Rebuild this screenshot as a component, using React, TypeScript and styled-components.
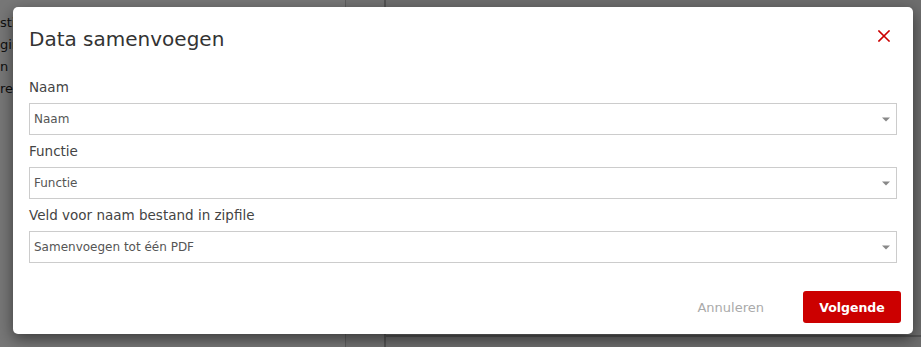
import React from "react";
import styled, { createGlobalStyle } from "styled-components";

const GlobalStyle = createGlobalStyle`
	html, body {
		margin: 0;
		padding: 0;
		height: 100%;
		overflow: hidden;
	}
	body {
		font-family: "DejaVu Sans", "Liberation Sans", sans-serif;
		color: #333;
	}
	#root {
		height: 100%;
	}
`;

const fields = [
	{ label: "Naam", value: "Naam" },
	{ label: "Functie", value: "Functie" },
	{ label: "Veld voor naam bestand in zipfile", value: "Samenvoegen tot één PDF" },
];

// fragments of the page behind the dialog, mostly hidden by it
const sideLines = ["stig", "gim", "n n", "re"];

function Caret() {
	return (
		<svg width="8" height="5" viewBox="0 0 8 5">
			<polygon points="0,0.5 8,0.5 4,4.5" fill="#888" />
		</svg>
	);
}

function CloseIcon() {
	return (
		<svg width="12" height="12" viewBox="0 0 12 12">
			<path d="M1 1 L11 11 M11 1 L1 11" stroke="#cc0000" strokeWidth="1.6" strokeLinecap="square" />
		</svg>
	);
}

export default function App() {
	return (
		<Screen>
			<GlobalStyle />
			<BackPage>
				<Sidebar>
					{sideLines.map((line) => (
						<SideLine key={line}>{line}</SideLine>
					))}
				</Sidebar>
				<Main>
					<Panel />
					<Panel $lower />
				</Main>
			</BackPage>
			<Backdrop />
			<ModalLayer>
				<Modal>
					<Header>
						<Title>Data samenvoegen</Title>
						<CloseButton aria-label="Sluiten">
							<CloseIcon />
						</CloseButton>
					</Header>
					<Body>
						{fields.map((f) => (
							<Field key={f.label}>
								<Label>{f.label}</Label>
								<Select>
									<SelectText>{f.value}</SelectText>
									<Caret />
								</Select>
							</Field>
						))}
					</Body>
					<Footer>
						<CancelButton>Annuleren</CancelButton>
						<PrimaryButton>Volgende</PrimaryButton>
					</Footer>
				</Modal>
			</ModalLayer>
		</Screen>
	);
}

const Screen = styled.div`
	position: relative;
	width: 100vw;
	height: 100vh;
	overflow: hidden;
`;

const BackPage = styled.div`
	display: flex;
	height: 100%;
	background: #e4e4e4;
`;

const Sidebar = styled.div`
	width: 346px;
	flex-shrink: 0;
	background: #eeeeee;
	border-right: 1px solid #bcbcbc;
	padding-top: 12px;
	box-sizing: border-box;
	display: flex;
	flex-direction: column;
`;

const SideLine = styled.div`
	font-size: 13px;
	line-height: 22px;
	color: #222;
	white-space: nowrap;
`;

const Main = styled.div`
	flex: 1;
	padding-left: 38px;
	display: flex;
	flex-direction: column;
`;

const Panel = styled.div<{ $lower?: boolean }>`
	height: ${(p) => (p.$lower ? "40px" : "335px")};
	flex-shrink: 0;
	background: #dddddd;
	border-left: 2px solid #a8a8a8;
	border-top: ${(p) => (p.$lower ? "2px solid #a8a8a8" : "none")};
	box-sizing: border-box;
`;

const Backdrop = styled.div`
	position: absolute;
	inset: 0;
	background: rgba(0, 0, 0, 0.5);
`;

const ModalLayer = styled.div`
	position: absolute;
	inset: 0;
	padding: 7px 0 0 13px;
`;

const Modal = styled.div`
	width: 900px;
	background: #fff;
	border-radius: 5px;
	box-shadow: 0 5px 15px rgba(0, 0, 0, 0.5);
	display: flex;
	flex-direction: column;
`;

const Header = styled.div`
	display: flex;
	justify-content: space-between;
	align-items: flex-start;
	padding: 20px 23px 0 16px;
`;

const Title = styled.h4`
	margin: 0;
	font-size: 20px;
	line-height: 24px;
	font-weight: normal;
	color: #333;
`;

const CloseButton = styled.button`
	border: none;
	background: none;
	padding: 0;
	margin-top: 3px;
	display: flex;
	cursor: pointer;
`;

const Body = styled.div`
	display: flex;
	flex-direction: column;
	gap: 6px;
	padding: 26px 16px 0 16px;
`;

const Field = styled.div`
	display: flex;
	flex-direction: column;
	gap: 6px;
`;

const Label = styled.label`
	font-size: 13.5px;
	line-height: 20px;
	color: #444;
`;

const Select = styled.div`
	height: 32px;
	box-sizing: border-box;
	border: 1px solid #cccccc;
	display: flex;
	align-items: center;
	justify-content: space-between;
	padding: 0 6px 0 4px;
`;

const SelectText = styled.span`
	font-size: 12px;
	color: #555;
`;

const Footer = styled.div`
	display: flex;
	justify-content: flex-end;
	align-items: center;
	gap: 23px;
	padding: 28px 12px 11px 16px;
`;

const CancelButton = styled.button`
	height: 32px;
	border: none;
	background: none;
	padding: 0 16px;
	font-family: inherit;
	font-size: 13px;
	color: #aaaaaa;
	cursor: pointer;
`;

const PrimaryButton = styled.button`
	height: 32px;
	width: 98px;
	border: none;
	border-radius: 3px;
	background: #cc0000;
	color: #fff;
	font-family: inherit;
	font-size: 12.5px;
	font-weight: bold;
	cursor: pointer;
`;
